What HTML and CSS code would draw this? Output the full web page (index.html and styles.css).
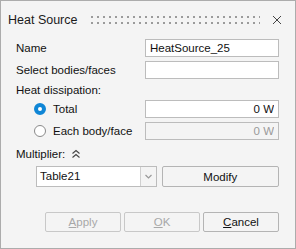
FILE: index.html
```html
<!DOCTYPE html>
<html lang="en">
<head>
    <meta charset="UTF-8">
    <title>Heat Source</title>
    <link rel="stylesheet" href="styles.css">
</head>
<body>

<div id="dialog">
    <div class="titlebar">
        <span class="title">Heat Source</span>
        <div class="grip"></div>
        <svg class="close" width="10" height="10" viewBox="0 0 10 10">
            <path d="M1 1 L9 9 M9 1 L1 9" stroke="#444" stroke-width="1" fill="none"/>
        </svg>
    </div>

    <div class="form">
        <div class="row r-name">
            <label for="name">Name</label>
            <input type="text" id="name" value="HeatSource_25">
        </div>
        <div class="row r-select">
            <label for="faces">Select bodies/faces</label>
            <input type="text" id="faces">
        </div>
        <div class="row r-heading">
            <span class="label">Heat dissipation:</span>
        </div>
        <div class="row r-total">
            <label class="radio"><span class="dot on"></span>Total</label>
            <input type="text" class="num" value="0 W">
        </div>
        <div class="row r-each">
            <label class="radio"><span class="dot"></span>Each body/face</label>
            <input type="text" class="num" value="0 W" disabled>
        </div>
        <div class="row r-mult">
            <span class="label">Multiplier:</span>
            <svg class="collapse" width="10" height="10" viewBox="0 0 10 10">
                <path d="M1.5 4.5 L5 1.5 L8.5 4.5 M1.5 8.5 L5 5.5 L8.5 8.5" stroke="#444" stroke-width="1.1" fill="none"/>
            </svg>
        </div>
        <div class="row r-table">
            <div class="combo">
                <span class="combo-text">Table21</span>
                <span class="combo-arrow">
                    <svg width="7" height="5" viewBox="0 0 7 5">
                        <path d="M0.5 1 L3.5 4 L6.5 1" stroke="#999" stroke-width="1.2" fill="none"/>
                    </svg>
                </span>
            </div>
            <button class="btn modify">Modify</button>
        </div>
    </div>

    <div class="actions">
        <button class="btn" disabled><u>A</u>pply</button>
        <button class="btn" disabled><u>O</u>K</button>
        <button class="btn"><u>C</u>ancel</button>
    </div>
</div>

</body>
</html>
```

FILE: styles.css
```css
body {
    margin: 0;
    padding: 0;
    font-family: 'Liberation Sans', Arial, sans-serif;
    font-size: 11.5px;
    color: #111;
}

#dialog {
    width: 296px;
    height: 249px;
    box-sizing: border-box;
    border: 1px solid #acacac;
    background-color: #f4f4f4;
    display: flex;
    flex-direction: column;
}

.titlebar {
    height: 37px;
    display: flex;
    align-items: center;
    padding: 0 10px 0 7px;
}

.title {
    font-size: 12.5px;
    color: #1b1b1b;
}

.grip {
    flex: 1;
    height: 10px;
    margin: 0 12px 0 14px;
    background-image: radial-gradient(circle, #9b9b9b 1px, transparent 1.3px);
    background-size: 6px 6px;
    background-position: -2px -1px;
}

.close {
    margin-right: 3px;
}

.form {
    padding: 0 16px 0 15px;
}

.row {
    display: flex;
    align-items: center;
    height: 18px;
}

.r-name { margin-top: 1px; }
.r-select { margin-top: 4px; }
.r-heading { margin-top: 2px; }
.r-total { margin-top: 1px; }
.r-each { margin-top: 4px; }
.r-mult { margin-top: 5px; }
.r-table { margin-top: 3px; height: 21px; padding-left: 20px; }

label, .label {
    flex: 1;
}

input {
    width: 134px;
    height: 18px;
    box-sizing: border-box;
    border: 1px solid #bcbcbc;
    background-color: #fff;
    font-family: inherit;
    font-size: 11.5px;
    color: #111;
    padding: 0 4px;
    margin: 0;
    outline: none;
}

input.num {
    text-align: right;
}

input:disabled {
    background-color: #f4f4f4;
    color: #9a9a9a;
}

.radio {
    display: flex;
    align-items: center;
    padding-left: 18px;
}

.dot {
    width: 12px;
    height: 12px;
    box-sizing: border-box;
    border-radius: 50%;
    border: 1px solid #8a8a8a;
    background-color: #fff;
    margin-right: 7px;
}

.dot.on {
    border: 4px solid #0f86d6;
}

.r-mult .label {
    flex: none;
}

.collapse {
    margin-left: 6px;
}

.combo {
    display: flex;
    width: 121px;
    height: 21px;
    box-sizing: border-box;
    border: 1px solid #bcbcbc;
}

.combo-text {
    flex: 1;
    background-color: #fff;
    padding-left: 3px;
    line-height: 19px;
}

.combo-arrow {
    width: 15px;
    border-left: 1px solid #d0d0d0;
    display: flex;
    align-items: center;
    justify-content: center;
}

.btn {
    height: 21px;
    box-sizing: border-box;
    border: 1px solid #b4b4b4;
    border-radius: 2px;
    background-color: #f4f4f4;
    font-family: inherit;
    font-size: 11.5px;
    color: #111;
    padding: 0;
}

.btn:disabled {
    color: #a8a8a8;
    border-color: #c8c8c8;
}

.modify {
    width: 118px;
    margin-left: 5px;
}

.actions {
    display: flex;
    justify-content: flex-end;
    gap: 3px;
    padding: 0 16px 0 0;
    margin-top: 25px;
}

.actions .btn {
    width: 76px;
    height: 20px;
}
```
